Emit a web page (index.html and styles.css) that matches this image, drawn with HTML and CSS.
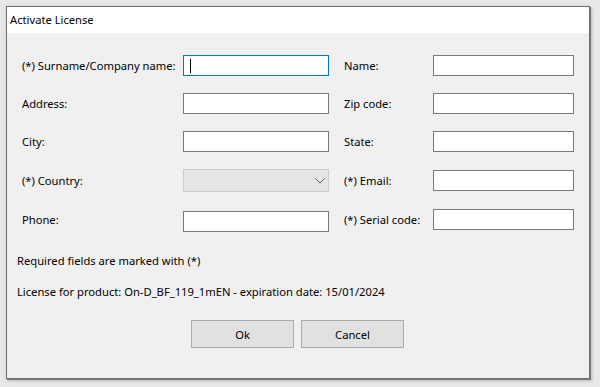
FILE: index.html
```html
<!DOCTYPE html>
<html>
<head>
<meta charset="utf-8">
<link rel="stylesheet" href="styles.css">
</head>
<body>
<div class="window">
  <div class="titlebar">Activate License</div>
  <div class="content">
    <div class="form">
      <label class="lbl">(*) Surname/Company name:</label>
      <div class="input focused"><span class="caret"></span></div>
      <label class="lbl lbl2">Name:</label>
      <div class="input"></div>

      <label class="lbl">Address:</label>
      <div class="input"></div>
      <label class="lbl lbl2">Zip code:</label>
      <div class="input"></div>

      <label class="lbl">City:</label>
      <div class="input"></div>
      <label class="lbl lbl2">State:</label>
      <div class="input"></div>

      <label class="lbl">(*) Country:</label>
      <div class="combo">
        <svg class="chev" width="10" height="6" viewBox="0 0 10 6"><path d="M0.5 0.5 L5 5 L9.5 0.5" fill="none" stroke="#606060" stroke-width="1"/></svg>
      </div>
      <label class="lbl lbl2">(*) Email:</label>
      <div class="input"></div>

      <label class="lbl">Phone:</label>
      <div class="input phone"></div>
      <label class="lbl lbl2">(*) Serial code:</label>
      <div class="input"></div>
    </div>
    <p class="note">Required fields are marked with (*)</p>
    <p class="note license">License for product: On-D_BF_119_1mEN - expiration date: 15/01/2024</p>
    <div class="buttons">
      <button class="btn">Ok</button>
      <button class="btn">Cancel</button>
    </div>
  </div>
</div>
</body>
</html>
```
FILE: styles.css
```css
html, body {
  margin: 0;
  padding: 0;
}
body {
  width: 600px;
  height: 387px;
  background: #e9e9e9;
  font-family: "Noto Sans", "Open Sans", sans-serif;
  font-size: 11.2px;
  color: #000;
  overflow: hidden;
}
.window {
  margin: 6px 0 0 6px;
  width: 582px;
  height: 371px;
  border: 1px solid #6e6e6e;
  background: #f0f0f0;
  box-shadow: 1px 1px 0 #7a7a7a, 2px 2px 3px rgba(0,0,0,0.18), 0 0 6px rgba(0,0,0,0.08);
  display: flex;
  flex-direction: column;
}
.titlebar {
  height: 26px;
  background: #fff;
  padding-left: 3px;
  line-height: 25px;
}
.content {
  padding: 22px 0 0 15px;
  display: flex;
  flex-direction: column;
}
.form {
  display: grid;
  grid-template-columns: 161px 146px 15px 89px 141px;
  grid-template-rows: 21px 21px 21px 23px 21px;
  row-gap: 17px;
  align-items: center;
}
.lbl {
  white-space: nowrap;
  line-height: 16px;
}
.lbl2 {
  grid-column: 4;
}
.input {
  box-sizing: border-box;
  height: 21px;
  border: 1px solid #7a7a7a;
  background: #fff;
  position: relative;
}
.input.focused {
  border-color: #0078d7;
}
.caret {
  position: absolute;
  left: 6px;
  top: 3px;
  width: 1px;
  height: 14px;
  background: #000;
}
.input.phone {
  margin-top: 4px;
}
.combo {
  box-sizing: border-box;
  height: 23px;
  border: 1px solid #cccccc;
  background: #e5e5e5;
  display: flex;
  align-items: center;
  justify-content: flex-end;
  padding-right: 3px;
}
.chev {
  display: block;
}
.note {
  margin: 0;
  margin-left: -5px;
  line-height: 16px;
}
.note:first-of-type {
  margin-top: 23px;
}
.license {
  margin-top: 15px;
}
.buttons {
  display: flex;
  gap: 7px;
  margin-top: 20px;
  margin-left: 169px;
}
.btn {
  box-sizing: border-box;
  width: 103px;
  height: 28px;
  border: 1px solid #adadad;
  background: #e1e1e1;
  font-family: inherit;
  font-size: 11.2px;
  color: #000;
  padding: 0;
}
```
